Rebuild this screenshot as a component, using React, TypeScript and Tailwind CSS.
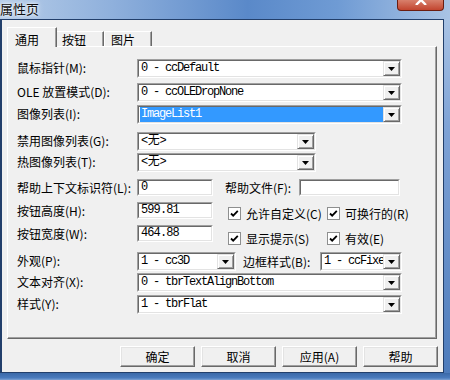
import React from "react";

const cjk = "font-['Noto_Sans_CJK_SC',sans-serif]";
const mono = "font-['Liberation_Mono','Noto_Sans_CJK_SC',monospace]";

function Sunken({ className = "", children }: { className?: string; children?: React.ReactNode }) {
  return (
    <div className={`shrink-0 border border-t-[#a0a0a0] border-l-[#a0a0a0] border-r-white border-b-white ${className}`}>
      <div className="flex h-full border border-t-[#696969] border-l-[#696969] border-r-[#e3e3e3] border-b-[#e3e3e3] bg-white">
        {children}
      </div>
    </div>
  );
}

function Combo({ w, text, selected = false, wide = false }: { w: string; text: string; selected?: boolean; wide?: boolean }) {
  return (
    <Sunken className={`${w} h-[19px]`}>
      <div
        className={`flex-1 min-w-0 overflow-hidden whitespace-nowrap ${mono} text-[12px] leading-[15px] ${
          wide ? "tracking-[-0.4px]" : "tracking-[-1.2px]"
        } ${selected ? "bg-[#3399ff] text-white ml-[1px] pl-[1px]" : "pl-[2px] text-black"}`}
      >
        {text}
      </div>
      <div className="w-[17px] h-full shrink-0 flex items-center justify-center bg-[#f0f0f0] border border-t-[#e3e3e3] border-l-[#e3e3e3] border-r-[#696969] border-b-[#696969] shadow-[inset_1px_1px_0_white,inset_-1px_-1px_0_#a0a0a0]">
        <svg width="7" height="4" viewBox="0 0 7 4">
          <path d="M0 0h7L3.5 4z" fill="#000" />
        </svg>
      </div>
    </Sunken>
  );
}

function TextBox({ w, text = "" }: { w: string; text?: string }) {
  return (
    <Sunken className={`${w} h-[17px]`}>
      <div className={`pl-[2px] ${mono} text-[12px] tracking-[-0.9px] leading-[13px] text-black`}>{text}</div>
    </Sunken>
  );
}

function Check({ label, className = "" }: { label: string; className?: string }) {
  return (
    <div className={`flex items-center gap-[5px] ${className}`}>
      <svg width="13" height="13" viewBox="0 0 13 13" className="shrink-0">
        <rect x="0.5" y="0.5" width="12" height="12" fill="#fff" stroke="#8e8f8f" />
        <path d="M3 6.5 5.2 8.7 9.8 3.9" fill="none" stroke="#000" strokeWidth="1.8" />
      </svg>
      <span className={`${cjk} text-[12px] leading-[13px] whitespace-nowrap`}>{label}</span>
    </div>
  );
}

function Label({ children, className = "" }: { children: React.ReactNode; className?: string }) {
  return (
    <div className={`${cjk} text-[12px] leading-[17px] whitespace-nowrap text-black ${className}`}>{children}</div>
  );
}

function Row({ label, className = "", children }: { label: string; className?: string; children?: React.ReactNode }) {
  return (
    <div className={`flex ${className}`}>
      <Label className="w-[120px] shrink-0">{label}</Label>
      {children}
    </div>
  );
}

function Btn({ children }: { children: React.ReactNode }) {
  return (
    <div
      className={`w-[75px] h-[21px] flex items-center justify-center bg-[#f0f0f0] border border-t-white border-l-white border-r-[#696969] border-b-[#696969] shadow-[inset_-1px_-1px_0_#a0a0a0,inset_1px_1px_0_#e3e3e3] ${cjk} text-[12px] text-black`}
    >
      {children}
    </div>
  );
}

export default function App() {
  return (
    <div className="w-[450px] h-[380px] flex flex-col overflow-hidden bg-[#f0f0f0]">
      {/* title bar */}
      <div className="h-[19px] shrink-0 flex items-start bg-[linear-gradient(90deg,#b5cce8_0%,#8fb0dc_25%,#5a89c9_55%,#6f9bd4_75%,#a9c3e4_100%)]">
        <div className={`${cjk} pt-[1px] text-[13px] leading-[15px] text-[#111] [text-shadow:0_0_6px_white,0_0_3px_white]`}>属性页</div>
        <div className="ml-auto mr-[6px] w-[47px] h-[11px] rounded-b-[4px] border border-t-0 border-[#6b1d10] bg-[linear-gradient(180deg,#d8806c,#c2452f)] flex justify-center overflow-hidden">
          <svg width="12" height="10" viewBox="0 0 12 10" className="-mt-[5px]">
            <path d="M1 0l10 10M11 0L1 10" stroke="#fff" strokeWidth="2.4" />
          </svg>
        </div>
      </div>

      {/* middle */}
      <div className="flex-1 flex min-h-0">
        <div className="w-[444px] border-t border-b border-r border-l-2 border-[#223f6b] bg-[#f0f0f0] flex flex-col">
          {/* tabs */}
          <div className={`pt-[7px] pl-[5px] flex items-end -mb-px ${cjk} text-[12px] text-black`}>
            <div className="relative z-10 w-[50px] h-[20px] pl-[7px] pt-[3px] bg-[#f0f0f0] border-t border-l border-r border-t-white border-l-white border-r-[#696969] shadow-[inset_-1px_0_0_#a0a0a0]">
              通用
            </div>
            <div className="w-[47px] h-[16px] pl-[5px] leading-[16px] border-t border-r border-t-white border-r-[#696969] shadow-[inset_-1px_0_0_#a0a0a0]">
              按钮
            </div>
            <div className="w-[48px] h-[16px] pl-[6px] leading-[16px] border-t border-r border-l border-l-white border-t-white border-r-[#696969] shadow-[inset_-1px_0_0_#a0a0a0]">
              图片
            </div>
          </div>

          {/* panel */}
          <div className="ml-[5px] w-[430px] h-[293px] border border-t-white border-l-white border-r-[#696969] border-b-[#696969] shadow-[inset_-1px_-1px_0_#a0a0a0] pl-[9px] pt-[12px] flex flex-col">
            <Row label="鼠标指针(M):">
              <Combo w="w-[265px]" text="0 - ccDefault" />
            </Row>
            <Row label="OLE 放置模式(D):" className="mt-[5px]">
              <Combo w="w-[265px]" text="0 - ccOLEDropNone" />
            </Row>
            <Row label="图像列表(I):" className="mt-[3px]">
              <Combo w="w-[265px]" text="ImageList1" selected />
            </Row>
            <Row label="禁用图像列表(G):" className="mt-[8px]">
              <Combo w="w-[179px]" text="<无>" wide />
            </Row>
            <Row label="热图像列表(T):" className="mt-[2px]">
              <Combo w="w-[179px]" text="<无>" wide />
            </Row>
            <Row label="帮助上下文标识符(L):" className="mt-[7px]">
              <TextBox w="w-[76px]" text="0" />
              <Label className="ml-[12px] w-[74px] leading-[17px]">帮助文件(F):</Label>
              <TextBox w="w-[101px]" />
            </Row>
            <Row label="按钮高度(H):" className="mt-[6px]">
              <TextBox w="w-[76px]" text="599.81" />
              <div className="flex mt-[5px] ml-[15px]">
                <Check label="允许自定义(C)" className="w-[99px]" />
                <Check label="可换行的(R)" />
              </div>
            </Row>
            <Row label="按钮宽度(W):" className="mt-[5px]">
              <TextBox w="w-[76px]" text="464.88" />
              <div className="flex mt-[7px] ml-[15px]">
                <Check label="显示提示(S)" className="w-[99px]" />
                <Check label="有效(E)" />
              </div>
            </Row>
            <Row label="外观(P):" className="mt-[7px]">
              <Combo w="w-[99px]" text="1 - cc3D" />
              <Label className="ml-[7px] w-[77px] leading-[19px]">边框样式(B):</Label>
              <Combo w="w-[82px]" text="1 - ccFixe" />
            </Row>
            <Row label="文本对齐(X):" className="mt-[2px]">
              <Combo w="w-[265px]" text="0 - tbrTextAlignBottom" />
            </Row>
            <div className="flex mt-[3px]">
              <Label className="w-[120px] shrink-0 leading-[13px]">样式(Y):</Label>
              <Combo w="w-[265px]" text="1 - tbrFlat" />
            </div>
          </div>

          {/* buttons */}
          <div className="mt-[7px] pr-[5px] flex justify-end gap-[6px]">
            <Btn>确定</Btn>
            <Btn>取消</Btn>
            <Btn>应用(A)</Btn>
            <Btn>帮助</Btn>
          </div>
        </div>
        <div className="flex-1 bg-[linear-gradient(180deg,#a9c3e4_0%,#7fa3d6_30%,#4d7bbb_100%)]" />
      </div>
      <div className="h-[7px] shrink-0 bg-[linear-gradient(180deg,#3b69a8,#4a7bbd_70%,#7fa2d3)]" />
    </div>
  );
}
